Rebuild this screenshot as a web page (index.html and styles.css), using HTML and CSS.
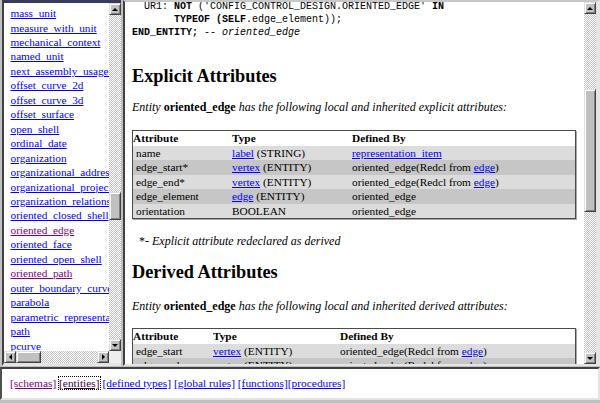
FILE: index.html
```html
<!DOCTYPE html>
<html>
<head>
<meta charset="utf-8">
<title>oriented_edge</title>
<link rel="stylesheet" href="styles.css">
</head>
<body>
<div class="screen">
  <div class="frame left-frame">
    <div class="pane list-pane">
      <ul class="entity-list">
        <li><a href="#">mass_unit</a></li>
        <li><a href="#">measure_with_unit</a></li>
        <li><a href="#">mechanical_context</a></li>
        <li><a href="#">named_unit</a></li>
        <li><a href="#">next_assembly_usage_occurrence</a></li>
        <li><a href="#">offset_curve_2d</a></li>
        <li><a href="#">offset_curve_3d</a></li>
        <li><a href="#">offset_surface</a></li>
        <li><a href="#">open_shell</a></li>
        <li><a href="#">ordinal_date</a></li>
        <li><a href="#">organization</a></li>
        <li><a href="#">organizational_address</a></li>
        <li><a href="#">organizational_project</a></li>
        <li><a href="#">organization_relationship</a></li>
        <li><a href="#">oriented_closed_shell</a></li>
        <li><a href="#" class="visited">oriented_edge</a></li>
        <li><a href="#">oriented_face</a></li>
        <li><a href="#">oriented_open_shell</a></li>
        <li><a href="#" class="visited">oriented_path</a></li>
        <li><a href="#">outer_boundary_curve</a></li>
        <li><a href="#">parabola</a></li>
        <li><a href="#">parametric_representation_context</a></li>
        <li><a href="#">path</a></li>
        <li><a href="#">pcurve</a></li>
        <li><a href="#">person</a></li>
      </ul>
    </div>
    <div class="vscroll left-v">
      <div class="sb-btn up"></div>
      <div class="track"><div class="thumb"></div></div>
      <div class="sb-btn down"></div>
    </div>
    <div class="hscroll">
      <div class="sb-btn left"></div>
      <div class="track"><div class="thumb"></div></div>
      <div class="sb-btn right"></div>
    </div>
    <div class="corner"></div>
  </div>

  <div class="frame main-frame">
    <div class="pane doc">
<pre class="code">  UR1: <b>NOT</b> ('CONFIG_CONTROL_DESIGN.ORIENTED_EDGE' <b>IN</b>
       <b>TYPEOF</b> <b>(SELF</b>.edge_element));
<b>END_ENTITY;</b> -- <i>oriented_edge</i></pre>
      <h2 class="sec-title first">Explicit Attributes</h2>
      <p class="intro"><i>Entity</i> <b>oriented_edge</b> <i>has the following local and inherited explicit attributes:</i></p>
      <table class="attr-table explicit">
        <tr class="hdr"><th class="c1">Attribute</th><th class="c2">Type</th><th class="c3">Defined By</th></tr>
        <tr class="lt"><td class="c1">name</td><td><a href="#">label</a> (STRING)</td><td><a href="#">representation_item</a></td></tr>
        <tr class="dk"><td class="c1">edge_start*</td><td><a href="#">vertex</a> (ENTITY)</td><td>oriented_edge(Redcl from <a href="#">edge</a>)</td></tr>
        <tr class="lt"><td class="c1">edge_end*</td><td><a href="#">vertex</a> (ENTITY)</td><td>oriented_edge(Redcl from <a href="#">edge</a>)</td></tr>
        <tr class="dk"><td class="c1">edge_element</td><td><a href="#">edge</a> (ENTITY)</td><td>oriented_edge</td></tr>
        <tr class="lt"><td class="c1">orientation</td><td>BOOLEAN</td><td>oriented_edge</td></tr>
      </table>
      <p class="note">*<i>- Explicit attribute redeclared as derived</i></p>
      <h2 class="sec-title">Derived Attributes</h2>
      <p class="intro second"><i>Entity</i> <b>oriented_edge</b> <i>has the following local and inherited derived attributes:</i></p>
      <table class="attr-table derived">
        <tr class="hdr"><th class="c1">Attribute</th><th class="c2">Type</th><th class="c3">Defined By</th></tr>
        <tr class="lt"><td class="c1">edge_start</td><td><a href="#">vertex</a> (ENTITY)</td><td>oriented_edge(Redcl from <a href="#">edge</a>)</td></tr>
        <tr class="dk"><td class="c1">edge_end</td><td><a href="#">vertex</a> (ENTITY)</td><td>oriented_edge(Redcl from <a href="#">edge</a>)</td></tr>
      </table>
    </div>
    <div class="vscroll main-v">
      <div class="sb-btn up"></div>
      <div class="track"><div class="thumb"></div></div>
      <div class="sb-btn down"></div>
    </div>
  </div>

  <div class="frame nav-frame">
    <a href="#" class="visited">[schemas]</a> <a href="#" class="focus">[entities]</a> <a href="#">[defined types]</a> <a href="#">[global rules]</a> <a href="#">[functions]</a><a href="#">[procedures]</a>
  </div>
</div>
</body>
</html>
```

FILE: styles.css
```css
html, body {
  margin: 0;
  padding: 0;
}

body {
  width: 600px;
  height: 403px;
  overflow: hidden;
  background: #c0c0c0;
  font-family: "Liberation Serif", "Times New Roman", serif;
  color: #000;
}

a {
  color: #0000ff;
}

a.visited {
  color: #800080;
}

.screen {
  display: grid;
  grid-template-columns: 122px 478px;
  grid-template-rows: 366px 33px;
  row-gap: 1px;
  height: 403px;
}

.frame {
  box-sizing: border-box;
  overflow: hidden;
}

.pane {
  overflow: hidden;
  background: #fff;
}

/* ---------- left frame ---------- */
.left-frame {
  display: grid;
  grid-template-columns: 105px 12px;
  grid-template-rows: 348px 12px;
  margin-left: 2px;
  width: 119px;
  border-left: 2px solid #404040;
  border-top: 3px solid #3a3a5e;
  border-bottom: 3px solid #e4e4e4;
}

.entity-list {
  list-style: none;
  margin: 3.1px 0 0 0;
  padding: 0 0 0 6.5px;
  font-size: 11.25px;
  line-height: 14.45px;
  white-space: nowrap;
}

/* ---------- scrollbars ---------- */
.vscroll {
  display: flex;
  flex-direction: column;
  width: 12px;
}

.hscroll {
  display: flex;
  flex-direction: row;
  height: 12px;
}

.track {
  flex: 1;
  display: flex;
  background: repeating-conic-gradient(#c0c0c0 0 25%, #ffffff 0 50%) 0 0 / 2px 2px;
}

.vscroll .track {
  flex-direction: column;
}

.sb-btn,
.thumb {
  box-sizing: border-box;
  background: #c0c0c0;
  border: 1px solid;
  border-color: #dfdfdf #404040 #404040 #dfdfdf;
  box-shadow: inset 1px 1px #ffffff, inset -1px -1px #808080;
}

.sb-btn {
  flex: none;
  width: 12px;
  height: 12px;
  display: flex;
  align-items: center;
  justify-content: center;
}

.sb-btn::after {
  content: "";
  width: 0;
  height: 0;
}

.sb-btn.up::after {
  border-left: 3px solid transparent;
  border-right: 3px solid transparent;
  border-bottom: 3px solid #000;
}

.sb-btn.down::after {
  border-left: 3px solid transparent;
  border-right: 3px solid transparent;
  border-top: 3px solid #000;
}

.sb-btn.left::after {
  border-top: 3px solid transparent;
  border-bottom: 3px solid transparent;
  border-right: 3px solid #000;
}

.sb-btn.right::after {
  border-top: 3px solid transparent;
  border-bottom: 3px solid transparent;
  border-left: 3px solid #000;
}

.left-v .thumb {
  margin-top: 177px;
  height: 28px;
}

.main-v .thumb {
  margin-top: 75px;
  height: 123px;
}

.hscroll .thumb {
  width: 25px;
  height: 12px;
}

.corner {
  background: #eeeeee;
}

/* ---------- main frame ---------- */
.main-frame {
  display: grid;
  grid-template-columns: 459px 12px;
  margin-left: 1px;
  width: 477px;
  border-left: 2px solid #404040;
  border-top: 2px solid #c8c8c8;
  border-bottom: 2px solid #e4e4e4;
  border-right: 4px solid #e4e4e4;
}

.doc {
  padding: 0 8px 0 7px;
  font-size: 12px;
  line-height: 14px;
}

.code {
  margin: -2.5px 0 0 0;
  font-family: "Liberation Mono", "Courier New", monospace;
  font-size: 10px;
  line-height: 13px;
}

.sec-title {
  margin: 13.5px 0 0 0;
  font-size: 18.3px;
  line-height: 21px;
  font-weight: bold;
}

.sec-title.first {
  margin-top: 27px;
}

.intro {
  margin: 13.5px 0 0 0;
}

.intro.second {
  margin-top: 16.5px;
}

.note {
  margin: 15px 0 0 0;
  padding-left: 7px;
}

.attr-table {
  width: 444px;
  margin-top: 16px;
  border-collapse: collapse;
  border: 1px solid #4a4a4a;
  box-shadow: 1px 1px 0 #a8a8a8;
  font-size: 11.3px;
  table-layout: fixed;
}

.attr-table.derived {
  margin-top: 15px;
}

.attr-table th,
.attr-table td {
  padding: 0;
  text-align: left;
  white-space: nowrap;
  overflow: hidden;
  line-height: 14.4px;
  height: 14.4px;
}

.attr-table th {
  height: 15px;
  font-weight: bold;
}

.attr-table td.c1 {
  padding-left: 3px;
}

.attr-table .hdr {
  background: #ffffff;
}

.attr-table .lt {
  background: #dcdcdc;
}

.attr-table .dk {
  background: #c6c6c6;
}

.explicit .c1 { width: 99px; }
.explicit .c2 { width: 120px; }
.derived .c1 { width: 80px; }
.derived .c2 { width: 127px; }

/* ---------- bottom frame ---------- */
.nav-frame {
  grid-column: 1 / -1;
  padding-left: 8px;
  background: #fff;
  border-top: 2px solid #404040;
  border-left: 2px solid #505050;
  border-right: 2px solid #e4e4e4;
  border-bottom: 2px solid #e4e4e4;
  font-size: 11.4px;
  line-height: 29px;
  white-space: nowrap;
}

.nav-frame a.focus {
  color: #3a003a;
  outline: 1px dotted #000;
}
```
